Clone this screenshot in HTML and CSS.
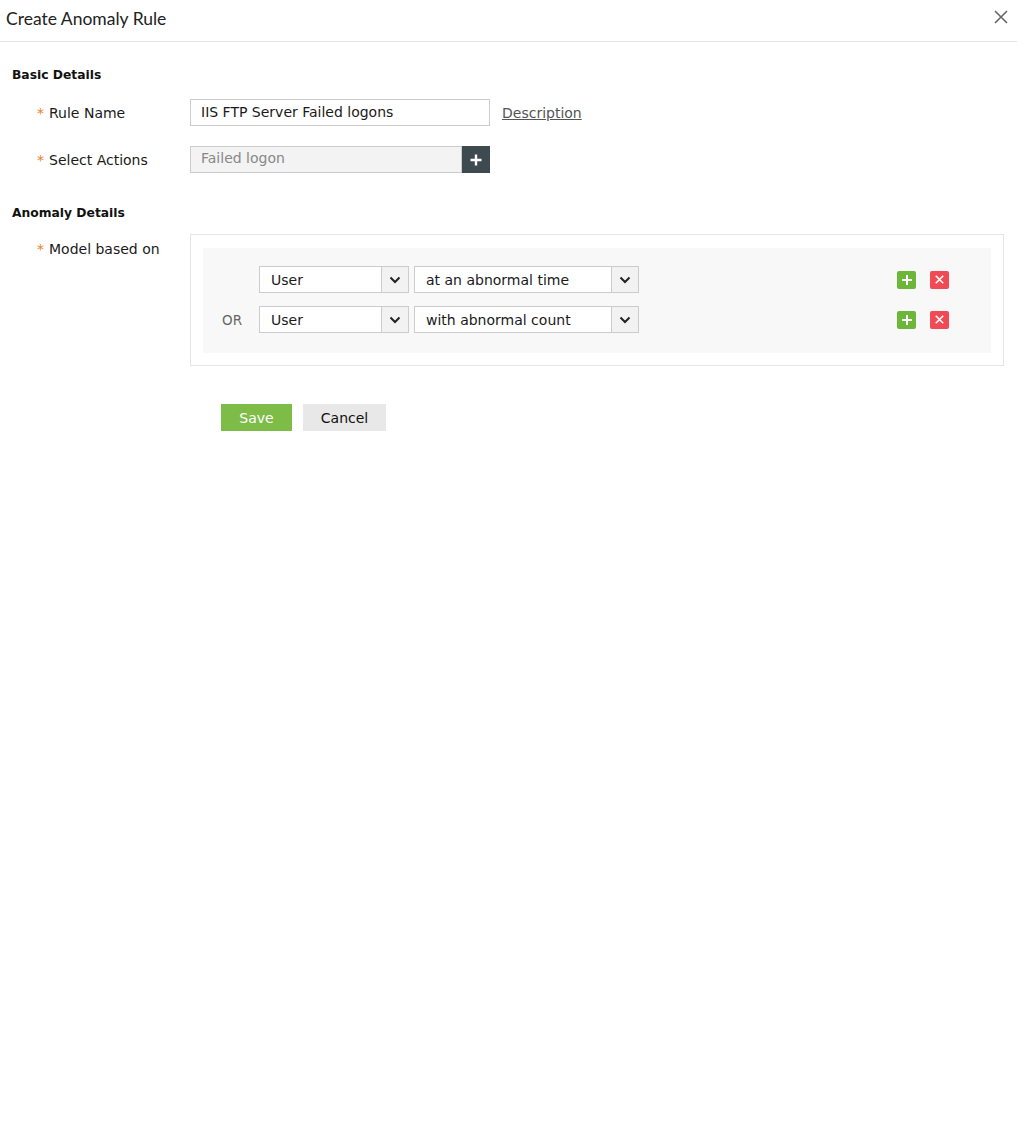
FILE: index.html
```html
<!DOCTYPE html>
<html>
<head>
<meta charset="utf-8">
<link rel="stylesheet" href="styles.css">
</head>
<body>
<div class="header">
  <div class="title">Create Anomaly Rule</div>
  <svg class="close" width="14" height="14" viewBox="0 0 14 14"><path d="M1 1L13 13M13 1L1 13" stroke="#666" stroke-width="1.6" fill="none"/></svg>
</div>
<div class="content">
  <div class="section-title first">Basic Details</div>
  <div class="form-row">
    <div class="label"><span class="req">*</span>Rule Name</div>
    <div class="field">
      <div class="input">IIS FTP Server Failed logons</div>
      <a class="desc" href="#">Description</a>
    </div>
  </div>
  <div class="form-row">
    <div class="label"><span class="req">*</span>Select Actions</div>
    <div class="field">
      <div class="input disabled">Failed logon</div>
      <div class="add-btn"><svg width="12" height="12" viewBox="0 0 12 12"><path d="M6 0.5V11.5M0.5 6H11.5" stroke="#fff" stroke-width="2.4"/></svg></div>
    </div>
  </div>
  <div class="section-title second">Anomaly Details</div>
  <div class="model-row">
    <div class="label"><span class="req">*</span>Model based on</div>
    <div class="model-box">
      <div class="model-inner">
        <div class="crit-row">
          <div class="op"></div>
          <div class="select s1"><span class="val">User</span><span class="arrow"><svg width="12" height="8" viewBox="0 0 12 8"><path d="M1.5 1.5L6 6L10.5 1.5" stroke="#222" stroke-width="2" fill="none"/></svg></span></div>
          <div class="select s2"><span class="val">at an abnormal time</span><span class="arrow"><svg width="12" height="8" viewBox="0 0 12 8"><path d="M1.5 1.5L6 6L10.5 1.5" stroke="#222" stroke-width="2" fill="none"/></svg></span></div>
          <div class="icons">
            <span class="ic plus"><svg width="10" height="10" viewBox="0 0 10 10"><path d="M5 0V10M0 5H10" stroke="#fff" stroke-width="2"/></svg></span>
            <span class="ic del"><svg width="9" height="9" viewBox="0 0 9 9"><path d="M0.8 0.8L8.2 8.2M8.2 0.8L0.8 8.2" stroke="#fff" stroke-width="1.6"/></svg></span>
          </div>
        </div>
        <div class="crit-row">
          <div class="op">OR</div>
          <div class="select s1"><span class="val">User</span><span class="arrow"><svg width="12" height="8" viewBox="0 0 12 8"><path d="M1.5 1.5L6 6L10.5 1.5" stroke="#222" stroke-width="2" fill="none"/></svg></span></div>
          <div class="select s2"><span class="val">with abnormal count</span><span class="arrow"><svg width="12" height="8" viewBox="0 0 12 8"><path d="M1.5 1.5L6 6L10.5 1.5" stroke="#222" stroke-width="2" fill="none"/></svg></span></div>
          <div class="icons">
            <span class="ic plus"><svg width="10" height="10" viewBox="0 0 10 10"><path d="M5 0V10M0 5H10" stroke="#fff" stroke-width="2"/></svg></span>
            <span class="ic del"><svg width="9" height="9" viewBox="0 0 9 9"><path d="M0.8 0.8L8.2 8.2M8.2 0.8L0.8 8.2" stroke="#fff" stroke-width="1.6"/></svg></span>
          </div>
        </div>
      </div>
    </div>
  </div>
  <div class="actions">
    <button class="btn save">Save</button>
    <button class="btn cancel">Cancel</button>
  </div>
</div>
</body>
</html>
```

FILE: styles.css
```css
* { box-sizing: border-box; }
html, body { margin: 0; padding: 0; background: #fff; }
body {
  font-family: "DejaVu Sans", Verdana, sans-serif;
  font-size: 14px;
  color: #1a1a1a;
}
.header {
  height: 42px;
  border-bottom: 1px solid #e4e4e4;
  display: flex;
  align-items: center;
  justify-content: space-between;
  padding: 0 9px 0 6px;
}
.title {
  font-family: Lato, "Open Sans", sans-serif;
  font-size: 17.5px;
  color: #222;
  margin-top: -4px;
}
.close { margin-top: -7px; }
.content { padding: 0 13px 0 12px; }
.section-title {
  font-weight: bold;
  font-size: 12.3px;
  color: #111;
  line-height: 16px;
  margin-top: 25px;
}
.section-title.second { margin-top: 32px; }
.form-row {
  display: flex;
  align-items: center;
  height: 27px;
  margin-top: 16px;
}
.form-row + .form-row { margin-top: 20px; }
.label {
  width: 178px;
  padding-left: 25px;
  white-space: nowrap;
}
.req { color: #f07a28; margin-right: 5px; }
.field { display: flex; align-items: center; }
.input {
  width: 300px;
  height: 27px;
  border: 1px solid #cccccc;
  padding: 0 10px;
  line-height: 25px;
  background: #fff;
}
.input.disabled {
  width: 272px;
  background: #f3f3f3;
  color: #888;
  line-height: 23px;
}
.desc {
  margin-left: 12px;
  color: #555;
  text-decoration: underline;
}
.add-btn {
  width: 28px;
  height: 27px;
  background: #3d4a50;
  display: flex;
  align-items: center;
  justify-content: center;
}
.model-row {
  display: flex;
  align-items: flex-start;
  margin-top: 13px;
}
.model-row .label { padding-top: 7px; }
.model-box {
  flex: 1;
  border: 1px solid #e4e4e4;
  padding: 13px 12px 12px 12px;
}
.model-inner {
  background: #f8f8f8;
  padding: 18px 42px 20px 0;
}
.crit-row {
  display: flex;
  align-items: center;
  height: 27px;
}
.crit-row + .crit-row { margin-top: 13px; }
.op {
  width: 56px;
  padding-left: 19px;
  color: #666;
  font-size: 13.5px;
}
.select {
  height: 27px;
  border: 1px solid #cccccc;
  background: #fff;
  display: flex;
  align-items: stretch;
}
.select .val {
  flex: 1;
  padding-left: 11px;
  line-height: 26px;
}
.select .arrow {
  width: 27px;
  border-left: 1px solid #cccccc;
  background: #f2f2f2;
  display: flex;
  align-items: center;
  justify-content: center;
}
.s1 { width: 150px; }
.s2 { width: 225px; margin-left: 5px; }
.icons {
  margin-left: auto;
  display: flex;
  gap: 14px;
}
.ic {
  width: 19px;
  height: 18px;
  border-radius: 2px;
  display: flex;
  align-items: center;
  justify-content: center;
}
.ic.plus { background: #6cb73a; }
.ic.del { background: #f04a55; }
.actions {
  display: flex;
  gap: 11px;
  margin-top: 38px;
  padding-left: 209px;
}
.btn {
  height: 27px;
  border: none;
  font-family: "DejaVu Sans", Verdana, sans-serif;
  font-size: 14px;
  padding: 0;
}
.save { width: 71px; background: #7dbd47; color: #fff; }
.cancel { width: 83px; background: #e8e8e8; color: #111; }
```
